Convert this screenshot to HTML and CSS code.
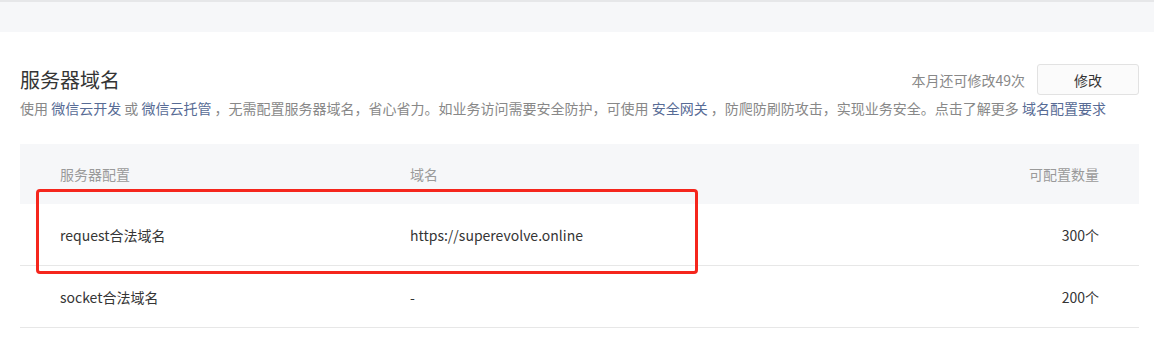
FILE: index.html
```html
<!DOCTYPE html>
<html lang="zh-CN">
<head>
    <meta charset="UTF-8">
    <meta name="viewport" content="width=device-width, initial-scale=1.0">
    <title>服务器域名</title>
    <link rel="stylesheet" href="styles.css">
</head>
<body>
    <!-- Top gray band -->
    <div class="top-band"></div>

    <div class="section">
        <!-- Section header -->
        <div class="section-head">
            <h2 class="section-title">服务器域名</h2>
            <div class="section-extra">
                <span class="quota">本月还可修改49次</span>
                <button class="btn">修改</button>
            </div>
        </div>
        <p class="section-desc">
            使用 <a href="#">微信云开发</a> 或 <a href="#">微信云托管</a> ，无需配置服务器域名，省心省力。如业务访问需要安全防护，可使用 <a href="#">安全网关</a> ，防爬防刷防攻击，实现业务安全。点击了解更多 <a href="#">域名配置要求</a>
        </p>

        <!-- Domain table -->
        <div class="table">
            <div class="table-row table-head">
                <div>服务器配置</div>
                <div>域名</div>
                <div class="num">可配置数量</div>
            </div>
            <div class="table-row">
                <div>request合法域名</div>
                <div>https://superevolve.online</div>
                <div class="num">300个</div>
            </div>
            <div class="table-row">
                <div>socket合法域名</div>
                <div>-</div>
                <div class="num">200个</div>
            </div>

            <!-- Highlight annotation -->
            <div class="highlight"></div>
        </div>
    </div>
</body>
</html>
```

FILE: styles.css
```css
/* Reset */
* {
    box-sizing: border-box;
    margin: 0;
    padding: 0;
}

body {
    font-family: "Noto Sans CJK SC", "Microsoft YaHei", sans-serif;
    font-size: 14px;
    color: #353535;
    background: #fff;
}

/* Top band */
.top-band {
    height: 32px;
    background: #f6f7f9;
    border-top: 2px solid #e6e7e9;
}

/* Section */
.section {
    padding: 32px 15px 0 20px;
}

.section-head {
    display: flex;
    align-items: center;
    justify-content: space-between;
    height: 31px;
}

.section-title {
    font-size: 20px;
    font-weight: normal;
    line-height: 28px;
    color: #353535;
}

.section-extra {
    display: flex;
    align-items: center;
    gap: 12px;
}

.quota {
    color: #888;
}

.btn {
    width: 102px;
    height: 31px;
    font-family: inherit;
    font-size: 14px;
    color: #353535;
    background: #fbfbfb;
    border: 1px solid #e2e2e2;
    border-radius: 3px;
    cursor: pointer;
}

.section-desc {
    margin-top: 3px;
    line-height: 20px;
    color: #888;
    white-space: nowrap;
}

.section-desc a {
    color: #576b95;
    text-decoration: none;
}

/* Table */
.table {
    position: relative;
    margin-top: 26px;
}

.table-row {
    display: grid;
    grid-template-columns: 350px 1fr auto;
    align-items: center;
    height: 62px;
    padding: 0 40px;
    border-bottom: 1px solid #e7e7e7;
}

.table-head {
    height: 60px;
    background: #f6f7f9;
    color: #9a9a9a;
    border-bottom: none;
}

.num {
    text-align: right;
}

/* Red annotation box */
.highlight {
    position: absolute;
    left: 16px;
    top: 45px;
    width: 662px;
    height: 85px;
    border: 3px solid #f5261d;
    border-radius: 4px;
}
```
